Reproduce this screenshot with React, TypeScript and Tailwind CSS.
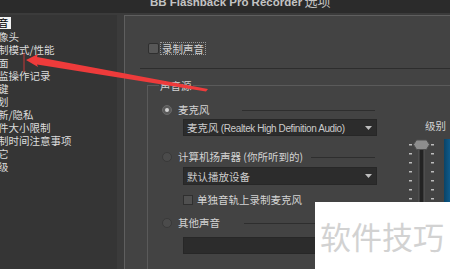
const sideItems = [
  "音",
  "像头",
  "制模式/性能",
  "面",
  "监操作记录",
  "键",
  "划",
  "新/隐私",
  "件大小限制",
  "制时间注意事项",
  "它",
  "级",
];

function Caret() {
  return (
    <svg width="7" height="4" viewBox="0 0 7 4" className="shrink-0">
      <path d="M0 0h7L3.5 4z" fill="#bdbdbd" />
    </svg>
  );
}

function Dropdown({ children, h }: { children?: React.ReactNode; h: string }) {
  return (
    <div
      className={`ml-[21px] flex items-center justify-between bg-[#2c2c2c] border border-[#272727] pl-[3px] pr-[4px] ${h}`}
    >
      <span className="text-[#cbcbcb] whitespace-nowrap leading-[13px]">{children}</span>
      <Caret />
    </div>
  );
}

function Radio({ checked }: { checked?: boolean }) {
  return (
    <span
      className={`w-[10px] h-[10px] rounded-full border flex items-center justify-center shrink-0 ${
        checked ? "bg-[#5a5a5a] border-[#6a6a6a]" : "bg-[#4b4b4b] border-[#393939]"
      }`}
    >
      {checked && <span className="w-[4px] h-[4px] rounded-full bg-[#d2d2d2]" />}
    </span>
  );
}

function RadioRow({ label, checked, lineGap }: { label: string; checked?: boolean; lineGap: string }) {
  return (
    <div className="flex items-center h-[12px]">
      <Radio checked={checked} />
      <span className="ml-[6px] whitespace-nowrap leading-[12px]">{label}</span>
      <span className={`flex-1 h-px bg-[#2e2e2e] mr-[2px] ${lineGap}`} />
    </div>
  );
}

function LevelSlider() {
  const ticks = [7, 16, 25, 34, 43, 52, 61, 70, 79, 88, 97, 106, 115];
  return (
    <svg width="35" height="130" viewBox="0 0 35 130" className="shrink-0">
      <rect x="14" y="12" width="5" height="118" fill="#232323" stroke="#5a5a5a" strokeWidth="1" />
      {ticks.map((y) => (
        <g key={y}>
          <rect x="4" y={y} width="3" height="1.5" fill="#bcbcbc" />
          <rect x="26" y={y} width="3" height="1.5" fill="#bcbcbc" />
        </g>
      ))}
      <path d="M8.5 7.5 L11.5 3 H21.5 L24.5 7.5 L21.5 12.5 H11.5 Z" fill="#8d8d8d" stroke="#4e4e4e" strokeWidth="1" />
    </svg>
  );
}

export default function App() {
  return (
    <div className="relative w-[450px] h-[269px] overflow-hidden bg-[#3b3b3b] text-[#d3d3d3] text-[10.5px] font-['Noto_Sans_CJK_SC',sans-serif]">
      {/* title bar, mostly cropped */}
      <div className="h-[13px] bg-[#2b2b2b] overflow-hidden pl-[150px]">
        <div className="-mt-[6px] leading-[13px] whitespace-nowrap text-[#c4c4c4]">
          <span className="font-['Liberation_Sans',sans-serif] text-[11.5px] font-bold">BB Flashback Pro Recorder</span>{" "}
          <span className="text-[13px]">选项</span>
        </div>
      </div>

      <div className="flex pt-[2px] h-[256px]">
        {/* category list */}
        <div className="w-[117px] shrink-0 bg-[#353535] pt-[2px] leading-[13px] text-[#dcdcdc]">
          {sideItems.map((item, i) =>
            i === 0 ? (
              <div key={item} className="h-[13px]">
                <div className="w-[11px] h-[12px] bg-[#f2f2f2] text-black overflow-hidden leading-[12px]">
                  <span className="block -ml-[2px]">{item}</span>
                </div>
              </div>
            ) : (
              <div key={item} className="h-[13px] whitespace-nowrap -ml-[2px]">
                {item}
              </div>
            )
          )}
        </div>

        {/* settings panel */}
        <div className="ml-[7px] flex-1 bg-[#434343] border-l border-t border-[#5f5f5f] pl-[15px]">
          <div className="mt-[26px] ml-[8px] flex items-center h-[13px]">
            <span className="w-[11px] h-[11px] rounded-[2px] bg-[#575757] border border-[#2f2f2f]" />
            <span className="ml-[1px] border border-dotted border-[#9a9a9a] px-[1px] leading-[11px] whitespace-nowrap">
              录制声音
            </span>
          </div>

          <div className="mt-[13px] h-px bg-[#2d2d2d]" />

          <fieldset className="mt-[10px] ml-[7px] border-l border-t border-[#5a5a5a] h-[190px]">
            <legend className="ml-[11px] px-[1px] leading-[13px]">声音源</legend>
            <div className="flex">
              <div className="w-[229px] shrink-0 pl-[14px] pt-[12px]">
                <RadioRow label="麦克风" checked lineGap="ml-[32px]" />
                <div className="mt-[3px]">
                  <Dropdown h="h-[17px]">
                    麦克风{" "}
                    <span className="font-['Liberation_Sans',sans-serif] text-[10px] tracking-[-0.4px]">
                      (Realtek High Definition Audio)
                    </span>
                  </Dropdown>
                </div>

                <div className="mt-[15px]">
                  <RadioRow label="计算机扬声器 (你所听到的)" lineGap="ml-[8px]" />
                </div>
                <div className="mt-[4px]">
                  <Dropdown h="h-[18px]">默认播放设备</Dropdown>
                </div>

                <div className="mt-[10px] ml-[21px] flex items-center h-[10px]">
                  <span className="w-[10px] h-[10px] bg-[#505050] border border-[#2f2f2f]" />
                  <span className="ml-[4px] whitespace-nowrap leading-[12px]">单独音轨上录制麦克风</span>
                </div>

                <div className="mt-[12px]">
                  <RadioRow label="其他声音" lineGap="ml-[24px]" />
                </div>
                <div className="mt-[8px]">
                  <Dropdown h="h-[17px]" />
                </div>
              </div>

              <div className="flex-1 pt-[27px]">
                <div className="pl-[48px] leading-[13px] whitespace-nowrap">级别</div>
                <div className="flex mt-[5px]">
                  <div className="ml-[28px]">
                    <LevelSlider />
                  </div>
                  <div className="ml-[4px] mt-[2px] w-[10px] h-[130px] bg-gradient-to-r from-[#0a4468] to-[#0f6aa3]" />
                </div>
              </div>
            </div>
          </fieldset>
        </div>
      </div>

      {/* red annotation arrow */}
      <svg className="absolute inset-0 pointer-events-none" width="450" height="269" viewBox="0 0 450 269">
        <line x1="24" y1="53" x2="24" y2="72" stroke="#e83a3a" strokeWidth="1" opacity="0.8" />
        <path d="M26 60 L38 54 L37 57 L208 89 L206 91.5 L37 64.5 L38 67 Z" fill="#ee3b3b" />
      </svg>

      {/* watermark */}
      <div className="absolute left-[315px] top-[202px] w-[135px] h-[67px] bg-white flex items-center pl-[5px] pb-[1px]">
        <span className="text-[31px] leading-none text-[#d2d2d2] whitespace-nowrap">软件技巧</span>
      </div>
    </div>
  );
}
